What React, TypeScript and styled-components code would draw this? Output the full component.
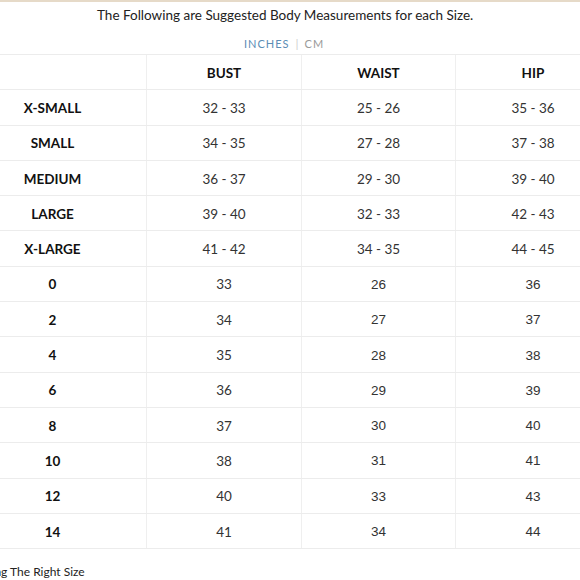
import React from "react";
import styled, { createGlobalStyle } from "styled-components";

const GlobalStyle = createGlobalStyle`
  html, body {
    margin: 0;
    padding: 0;
    background: #ffffff;
    overflow: hidden;
  }
  body {
    font-family: Lato, "Open Sans", sans-serif;
    color: #222;
  }
`;

type Row = { size: string; bust: string; waist: string; hip: string };

const ROWS: Row[] = [
  { size: "X-SMALL", bust: "32 - 33", waist: "25 - 26", hip: "35 - 36" },
  { size: "SMALL", bust: "34 - 35", waist: "27 - 28", hip: "37 - 38" },
  { size: "MEDIUM", bust: "36 - 37", waist: "29 - 30", hip: "39 - 40" },
  { size: "LARGE", bust: "39 - 40", waist: "32 - 33", hip: "42 - 43" },
  { size: "X-LARGE", bust: "41 - 42", waist: "34 - 35", hip: "44 - 45" },
  { size: "0", bust: "33", waist: "26", hip: "36" },
  { size: "2", bust: "34", waist: "27", hip: "37" },
  { size: "4", bust: "35", waist: "28", hip: "38" },
  { size: "6", bust: "36", waist: "29", hip: "39" },
  { size: "8", bust: "37", waist: "30", hip: "40" },
  { size: "10", bust: "38", waist: "31", hip: "41" },
  { size: "12", bust: "40", waist: "33", hip: "43" },
  { size: "14", bust: "41", waist: "34", hip: "44" },
];

const App = () => {
  return (
    <React.Fragment>
      <GlobalStyle />
      <Page>
        <TopRule />
        <Title>The Following are Suggested Body Measurements for each Size.</Title>
        <Units>
          <Unit $active>INCHES</Unit>
          <Divider>|</Divider>
          <Unit>CM</Unit>
        </Units>
        <Table>
          <TableRow>
            <Cell $first />
            <Cell $head>BUST</Cell>
            <Cell $head>WAIST</Cell>
            <Cell $head>HIP</Cell>
          </TableRow>
          {ROWS.map((row) => {
            const numeric = !row.bust.includes("-");
            return (
              <TableRow key={row.size}>
                <Cell $first $head>
                  {row.size}
                </Cell>
                <Cell>{row.bust}</Cell>
                <Cell $arial={numeric}>{row.waist}</Cell>
                <Cell $arial={numeric}>{row.hip}</Cell>
              </TableRow>
            );
          })}
        </Table>
        <Footer>Choosing The Right Size</Footer>
      </Page>
    </React.Fragment>
  );
};

export default App;

const Page = styled.div`
  width: 580px;
  height: 580px;
  overflow: hidden;
  display: flex;
  flex-direction: column;
`;

const TopRule = styled.div`
  height: 2px;
  background: #e6dac8;
  flex-shrink: 0;
`;

const Title = styled.div`
  margin-top: 5px;
  padding-left: 97px;
  font-size: 13.5px;
  line-height: 16px;
  color: #222;
  white-space: nowrap;
`;

const Units = styled.div`
  margin-top: 13px;
  display: flex;
  align-items: center;
  padding-left: 244px;
  height: 14px;
  gap: 6px;
`;

const Unit = styled.span<{ $active?: boolean }>`
  font-size: 11px;
  letter-spacing: 1px;
  color: ${(p) => (p.$active ? "#5b8db5" : "#9a9a9a")};
`;

const Divider = styled.span`
  font-size: 12px;
  color: #cfcfcf;
`;

const Table = styled.div`
  margin-top: 4px;
  margin-left: -41px;
  width: 652px;
  display: flex;
  flex-direction: column;
  flex-shrink: 0;
  border-top: 1px solid #ececec;
`;

const TableRow = styled.div`
  display: grid;
  grid-template-columns: 188px 155px 154px 155px;
  height: 35.3px;
  box-sizing: border-box;
  border-bottom: 1px solid #ececec;
`;

const Cell = styled.div<{ $head?: boolean; $first?: boolean; $arial?: boolean }>`
  display: flex;
  align-items: center;
  justify-content: center;
  border-right: 1px solid #efefef;
  font-family: ${(p) =>
    p.$arial ? '"Liberation Sans", Arial, sans-serif' : 'Lato, "Open Sans", sans-serif'};
  font-size: 13.5px;
  font-weight: ${(p) => (p.$head ? 700 : 400)};
  color: ${(p) => (p.$head ? "#111" : "#333")};
  padding-top: 1px;
`;

const Footer = styled.div`
  margin-top: 15px;
  margin-left: -42px;
  font-size: 12px;
  color: #222;
  white-space: nowrap;
`;
